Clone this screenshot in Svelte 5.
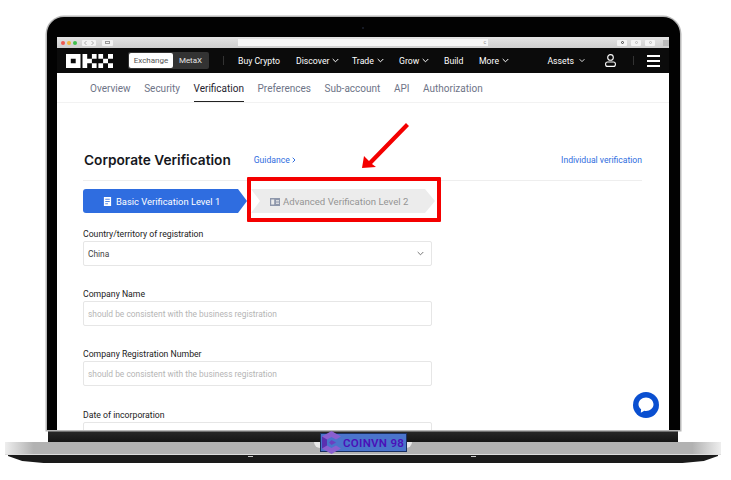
<script>
	const menu = [
		{ label: 'Buy Crypto', w: 58 },
		{ label: 'Discover', caret: true, w: 56 },
		{ label: 'Trade', caret: true, w: 47 },
		{ label: 'Grow', caret: true, w: 45 },
		{ label: 'Build', w: 35 },
		{ label: 'More', caret: true, w: 40 }
	];
	const tabs = ['Overview', 'Security', 'Verification', 'Preferences', 'Sub-account', 'API', 'Authorization'];
	const fields = [
		{ label: 'Company Name', hint: 'should be consistent with the business registration' },
		{ label: 'Company Registration Number', hint: 'should be consistent with the business registration' }
	];
</script>

<div class="page">
	<div class="lid">
		<span class="camera"></span>
		<div class="screen">
			<div class="chrome">
				<span class="dot red"></span>
				<span class="dot yellow"></span>
				<span class="dot green"></span>
				<span class="chrome-btn wide">
					<svg width="12" height="6" viewBox="0 0 12 6"><path d="M3.5 1 1.5 3l2 2M8.5 1l2 2-2 2" fill="none" stroke="#999" stroke-width=".8" /></svg>
				</span>
				<span class="chrome-btn side"><i></i></span>
				<div class="address"><span>c</span></div>
				<span class="chrome-btn small dark"><i></i></span>
				<span class="chrome-btn small"><i></i></span>
				<span class="chrome-btn small"><i></i></span>
				<span class="plus"></span>
			</div>

			<nav class="topnav">
				<svg class="logo" width="47" height="14" viewBox="0 0 47 14" fill="#fff">
					<path fill-rule="evenodd" d="M0 0h14.500v14H0zM4.800 4.700v4.600h4.900V4.700z" />
					<path d="M16.500 0h4.700v14h-4.700zM21.200 4.700h4.700v4.600h-4.700zM25.900 0h4.700v4.700h-4.700zM25.900 9.300h4.700V14h-4.700z" />
					<path d="M32.400 0h4.700v4.700h-4.700zM42 0h5v4.700h-5zM37.100 4.700H42v4.600h-4.900zM32.400 9.300h4.700V14h-4.700zM42 9.300h5V14h-5z" />
				</svg>
				<div class="switch">
					<span class="on">Exchange</span>
					<span>MetaX</span>
				</div>
				<span class="rule"></span>
				<div class="menu">
					{#each menu as item}
						<span class="menu-item" style="width: {item.w}px">
							{item.label}
							{#if item.caret}
								<svg width="7" height="5" viewBox="0 0 7 5"><path d="M.7 1 3.5 3.8 6.3 1" fill="none" stroke="#fff" stroke-width="1" /></svg>
							{/if}
						</span>
					{/each}
				</div>
				<div class="right">
					<span class="assets">Assets</span>
					<svg class="assets-caret" width="6" height="5" viewBox="0 0 7 5"><path d="M.7 1 3.5 3.8 6.3 1" fill="none" stroke="#fff" stroke-width="1" /></svg>
					<svg class="user" width="11" height="13" viewBox="0 0 11 13" fill="none" stroke="#fff" stroke-width="1.1">
						<circle cx="5.500" cy="3.400" r="2.800" />
						<rect x=".6" y="8" width="9.800" height="4.400" rx="2" />
					</svg>
					<span class="rule light"></span>
					<span class="burger"><i></i><i></i><i></i></span>
				</div>
			</nav>

			<div class="tabs">
				{#each tabs as tab}
					<span class="tab" class:active={tab === 'Verification'}>{tab}</span>
				{/each}
			</div>

			<main class="content">
				<header class="head">
					<h1>Corporate Verification</h1>
					<a class="guide" href="#guide">Guidance
						<svg width="4" height="6" viewBox="0 0 4 6"><path d="M.7.7 3 3 .7 5.300" fill="none" stroke="#2f6de0" stroke-width="1" /></svg>
					</a>
					<a class="switch-link" href="#individual">Individual verification</a>
				</header>

				<div class="steps">
					<div class="step first">
						<svg width="9" height="9" viewBox="0 0 10 10"><path fill="#fff" d="M1 0h8v10H1z" /><path stroke="#2f6de0" stroke-width=".9" d="M2.500 2.500h5M2.500 5h5M2.500 7.500h3" /></svg>
						Basic Verification Level 1
					</div>
					<div class="step second">
						<svg width="10" height="8" viewBox="0 0 10 8"><path fill="#8e97ab" d="M0 0h10v8H0z" /><path fill="#ececec" d="M1.200 1.500h3v5h-3z" /><path stroke="#ececec" stroke-width=".8" d="M6 2.500h3M6 4h3M6 5.500h3" /></svg>
						Advanced Verification Level 2
					</div>
				</div>

				<div class="field country">
					<label for="country">Country/territory of registration</label>
					<div class="box" id="country">
						<span class="value">China</span>
						<svg width="7" height="5" viewBox="0 0 7 5"><path d="M.7 1 3.500 3.800 6.300 1" fill="none" stroke="#666" stroke-width=".9" /></svg>
					</div>
				</div>

				{#each fields as f}
					<div class="field">
						<span class="label">{f.label}</span>
						<div class="box"><span class="hint">{f.hint}</span></div>
					</div>
				{/each}

				<div class="field last">
					<span class="label">Date of incorporation</span>
					<div class="box"></div>
				</div>
			</main>

			<button class="chat" aria-label="Chat">
				<svg width="18" height="18" viewBox="0 0 18 18"><path fill="#fff" d="M9 1.500c4.200 0 7.500 3 7.500 6.800s-3.300 6.700-7.500 6.700c-.6 0-1.100 0-1.600-.2L3.800 16.800l.3-3.500C2.400 12 1.500 10.300 1.500 8.300 1.500 4.500 4.800 1.500 9 1.500z" /></svg>
			</button>
		</div>
	</div>

	<div class="chin"></div>
	<div class="base"></div>
	<div class="under"><i></i><i></i></div>

	<!-- annotations sitting on top of the shot -->
	<div class="callout"></div>
	<svg class="arrow" width="56" height="54" viewBox="0 0 56 54">
		<path d="M4 47 6 35 11 40 48 2 51 5 14 43 18 46z" fill="#f40000" />
	</svg>
	<div class="mark">
		<svg class="cube" width="21" height="23" viewBox="0 0 21 23">
			<path fill="#8a5fd0" d="M10.500 0 20 5.500l-5 3-4.500-2.500L6 8.500v6l4.500 2.500 4.500-2.500 5 3L10.500 23 1 17.500v-12z" />
			<path fill="#5a2fb0" d="M1 5.500 6 8.500v6l-5 3z" />
			<path fill="#6b3fc0" d="M10.500 9 15 11.500 10.500 14 8 11.500z" />
		</svg>
		<span>COINVN 98</span>
	</div>
</div>

<style>
	:global(body) {
		margin: 0;
		background: #fff;
	}

	.page {
		position: relative;
		width: 731px;
		height: 480px;
		overflow: hidden;
		background: #fff;
		font-family: Roboto, 'Noto Sans', sans-serif;
		padding-top: 17px;
		box-sizing: border-box;
	}

	.lid {
		position: relative;
		box-sizing: border-box;
		width: 633px;
		height: 413px;
		margin-left: 47px;
		padding: 20px 11px 0 10px;
		background: #020202;
		border-radius: 17px 17px 0 0;
		box-shadow: 0 0 0 1.5px #b8b8b8;
	}

	.camera {
		position: absolute;
		left: 315px;
		top: 10px;
		width: 2px;
		height: 2px;
		border-radius: 50%;
		background: #1c2230;
	}

	.screen {
		position: relative;
		height: 393px;
		overflow: hidden;
		background: #fff;
	}

	.chrome {
		display: flex;
		align-items: center;
		height: 11px;
		padding-left: 4px;
		background: linear-gradient(#e4e4e4, #cfcfcf);
	}

	.dot {
		width: 4px;
		height: 4px;
		margin-right: 2px;
		border-radius: 50%;
	}

	.red { background: #ee5a52; }
	.yellow { background: #f2b63c; }
	.green { background: #3fc04c; }

	.chrome-btn {
		display: flex;
		align-items: center;
		justify-content: center;
		height: 6px;
		background: #f4f4f4;
		border-radius: 1px;
	}

	.chrome-btn.wide {
		width: 14px;
		margin-left: 3px;
	}

	.chrome-btn.side {
		width: 11px;
		margin-left: 6px;
	}

	.chrome-btn.side i {
		width: 5px;
		height: 3px;
		border: 1px solid #999;
		box-sizing: border-box;
	}

	.address {
		display: flex;
		align-items: center;
		justify-content: flex-end;
		width: 250px;
		height: 7px;
		margin-left: 125px;
		padding-right: 2px;
		box-sizing: border-box;
		background: #f6f6f6;
		font-size: 5px;
		line-height: 7px;
		color: #888;
	}

	.chrome-btn.small {
		width: 10px;
		margin-right: 4px;
	}

	.address + .chrome-btn.small {
		margin-left: 129px;
	}

	.chrome-btn.small i {
		width: 3px;
		height: 3px;
		border: 1px solid #bbb;
		box-sizing: border-box;
		border-radius: 50%;
	}

	.chrome-btn.dark i {
		border-color: #444;
	}

	.plus {
		width: 6px;
		height: 6px;
		margin-left: auto;
		background: #bcbcbc;
	}

	.topnav {
		display: flex;
		align-items: center;
		height: 25px;
		padding: 0 9px;
		background: #0b0b0b;
		color: #fff;
		font-size: 8.7px;
	}

	.logo,
	.switch,
	.rule,
	.menu,
	.right {
		flex: none;
	}

	.switch {
		display: flex;
		width: 81px;
		height: 17px;
		margin-left: 15px;
		box-sizing: border-box;
		padding: 1px;
		background: #333;
		border-radius: 2px;
		font-size: 8px;
		line-height: 15px;
		text-align: center;
	}

	.switch span {
		flex: 1;
		color: #e6e6e6;
	}

	.switch .on {
		flex: none;
		width: 44px;
		background: #fff;
		color: #555;
		border-radius: 2px;
	}

	.rule {
		width: 1px;
		height: 9px;
		margin-left: 14px;
		background: #333;
	}

	.menu {
		display: flex;
		margin-left: 14px;
	}

	.menu-item {
		display: flex;
		align-items: center;
		gap: 3px;
		white-space: nowrap;
	}

	.right {
		display: flex;
		align-items: center;
		margin-left: auto;
	}

	.assets-caret {
		margin-left: 5px;
	}

	.user {
		margin-left: 20px;
	}

	.rule.light {
		margin-left: 17px;
	}

	.burger {
		display: flex;
		flex-direction: column;
		gap: 3px;
		margin-left: 13px;
	}

	.burger i {
		display: block;
		width: 13px;
		height: 2px;
		background: #fff;
	}

	.tabs {
		display: flex;
		gap: 13.6px;
		height: 30px;
		padding-left: 33px;
		box-sizing: border-box;
		border-bottom: 1px solid #f2f2f2;
		font-size: 10px;
		line-height: 31px;
		color: #6e7487;
	}

	.tab {
		height: 29px;
	}

	.tab.active {
		color: #1f2430;
		box-shadow: inset 0 -1px 0 #222;
	}

	.content {
		padding: 0 27px 0 26px;
		color: #222;
	}

	.head {
		display: flex;
		align-items: center;
		height: 78px;
		padding-top: 37px;
		box-sizing: border-box;
		border-bottom: 1px solid #eee;
	}

	h1 {
		margin: 0 0 0 1px;
		font-family: Inter, Roboto, sans-serif;
		font-size: 13.7px;
		font-weight: 600;
		color: #16181d;
	}

	a {
		font-size: 8.6px;
		color: #2f6de0;
		text-decoration: none;
	}

	.guide {
		margin-left: 23px;
	}

	.switch-link {
		margin-left: auto;
	}

	.steps {
		display: flex;
		gap: 4px;
		margin-top: 8px;
	}

	.step {
		display: flex;
		align-items: center;
		height: 24px;
		padding-top: 1px;
		white-space: nowrap;
	}

	.first {
		gap: 4px;
		width: 164px;
		padding-left: 20px;
		box-sizing: border-box;
		font-size: 9.4px;
		color: #fff;
		background: #2f6de0;
		border-radius: 3px 0 0 3px;
		clip-path: polygon(0 0, 155px 0, 100% 50%, 155px 100%, 0 100%);
	}

	.second {
		gap: 3px;
		width: 184px;
		padding-left: 19px;
		box-sizing: border-box;
		font-size: 9.6px;
		color: #949494;
		background: #ececec;
		clip-path: polygon(0 0, 174px 0, 100% 50%, 174px 100%, 0 100%, 9px 50%);
	}

	.field {
		width: 349px;
		margin-top: 21px;
	}

	.field.country {
		margin-top: 14px;
	}

	.field.last {
		margin-top: 22px;
	}

	label,
	.label {
		display: block;
		height: 14px;
		font-size: 8.7px;
		line-height: 14px;
		color: #222;
	}

	.box {
		display: flex;
		align-items: center;
		justify-content: space-between;
		height: 25px;
		padding: 0 7px 0 4px;
		box-sizing: border-box;
		border: 1px solid #e6e6e6;
		border-radius: 2px;
		font-size: 8.4px;
	}

	.value {
		color: #444;
	}

	.hint {
		color: #b5b5b5;
	}

	.chat {
		position: absolute;
		right: 10px;
		bottom: 12px;
		display: flex;
		align-items: center;
		justify-content: center;
		width: 26px;
		height: 26px;
		padding: 0;
		border: 0;
		border-radius: 50%;
		background: #0a4fd0;
	}

	.chin {
		width: 630px;
		height: 12px;
		margin-left: 48px;
		background: linear-gradient(#2a2a2a, #151515);
	}

	.base {
		position: relative;
		width: 716px;
		height: 13px;
		margin-left: 5px;
		background: linear-gradient(90deg, #eee, #b2b2b2 4%, #b2b2b2 96%, #eee);
		border-bottom: 1px solid #ddd;
		box-sizing: border-box;
	}

	.base::before {
		content: '';
		position: absolute;
		left: 309px;
		top: 0;
		width: 98px;
		height: 6px;
		background: #e8e8e8;
		border-radius: 0 0 6px 6px;
	}

	.under {
		position: relative;
		width: 710px;
		height: 10px;
		margin-left: 8px;
		background: #1a1a1a;
		clip-path: polygon(0 0, 100% 0, 100% 10%, 98% 60%, 95% 80%, 5% 80%, 2% 60%, 0 10%);
	}

	.under i {
		position: absolute;
		top: 1px;
		width: 5px;
		height: 1px;
		background: #ccc;
	}

	.under i:first-child {
		left: 240px;
	}

	.under i:last-child {
		left: 463px;
	}

	.callout {
		position: absolute;
		left: 247px;
		top: 177px;
		width: 194px;
		height: 45px;
		box-sizing: border-box;
		border: 4px solid #f40000;
		border-radius: 1px;
	}

	.arrow {
		position: absolute;
		left: 358px;
		top: 121px;
	}

	.mark {
		position: absolute;
		left: 320px;
		top: 433px;
		display: flex;
		align-items: center;
		width: 87px;
		height: 19px;
		box-sizing: border-box;
		padding-left: 22px;
		background: #4a74cc;
		border: 1px solid #1a2f60;
		color: #4a10b8;
		font-size: 11.5px;
		font-weight: 600;
		letter-spacing: 0.3px;
		white-space: nowrap;
	}

	.cube {
		position: absolute;
		left: 0;
		top: -3px;
	}
</style>
